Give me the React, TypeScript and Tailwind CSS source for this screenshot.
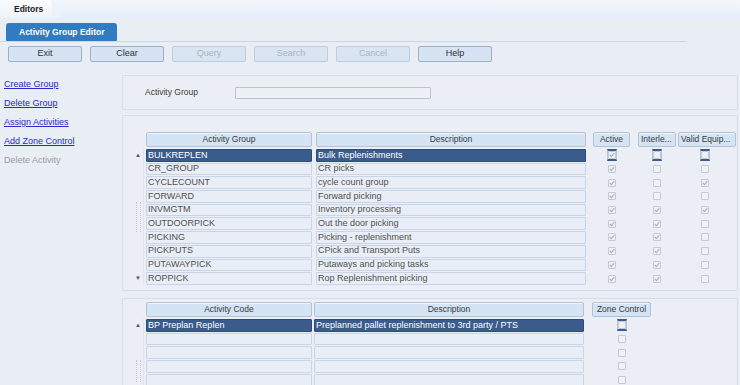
import React from "react";

type Row = { code: string; desc: string; a: boolean; i: boolean; v: boolean };

const rows: Row[] = [
  { code: "BULKREPLEN", desc: "Bulk Replenishments", a: true, i: false, v: false },
  { code: "CR_GROUP", desc: "CR picks", a: true, i: false, v: false },
  { code: "CYCLECOUNT", desc: "cycle count group", a: true, i: false, v: true },
  { code: "FORWARD", desc: "Forward picking", a: true, i: false, v: false },
  { code: "INVMGTM", desc: "Inventory processing", a: true, i: true, v: true },
  { code: "OUTDOORPICK", desc: "Out the door picking", a: true, i: true, v: false },
  { code: "PICKING", desc: "Picking - replenishment", a: true, i: true, v: false },
  { code: "PICKPUTS", desc: "CPick and Transport Puts", a: true, i: true, v: false },
  { code: "PUTAWAYPICK", desc: "Putaways and picking tasks", a: true, i: true, v: false },
  { code: "ROPPICK", desc: "Rop Replenishment picking", a: true, i: true, v: false },
];

function Check({ checked, focus }: { checked: boolean; focus?: boolean }) {
  const box = (
    <div className="w-[8px] h-[8px] border border-[#c3cad5] bg-[#eef1f6] rounded-[1px] flex items-center justify-center">
      {checked && (
        <svg width="6" height="6" viewBox="0 0 6 6">
          <polyline points="0.8,3 2.4,4.6 5.3,1.2" fill="none" stroke="#aab2be" strokeWidth="1.1" />
        </svg>
      )}
    </div>
  );
  if (focus) {
    return (
      <div className="w-[10px] h-[12px] border-t-[2px] border-b-[2px] border-x border-t-[#3b5d8e] border-b-[#3b5d8e] border-x-[#b9c3d0] flex items-center justify-center">
        {box}
      </div>
    );
  }
  return box;
}

function HeadCell({ w, children, align = "center" }: { w: string; children: React.ReactNode; align?: string }) {
  return (
    <div
      className={`${w} h-[15px] shrink-0 bg-[#d4e4f4] border border-[#b2c3d8] rounded-[2px] shadow-[inset_0_1px_0_#eef5fc] text-[8.5px] text-[#3a3a3a] flex items-center ${align === "center" ? "justify-center" : "justify-start pl-[2px]"}`}
    >
      {children}
    </div>
  );
}

function Cell({ w, text, sel }: { w: string; text?: string; sel?: boolean }) {
  return (
    <div
      className={`${w} h-full shrink-0 rounded-[1px] border flex items-center pl-[1px] text-[9px] whitespace-nowrap overflow-hidden ${
        sel ? "bg-[#3a5c8c] border-[#2e4c78] text-white" : "bg-[#e9eef6] border-[#c8d5e7] text-[#505050]"
      }`}
    >
      {text}
    </div>
  );
}

function ScrollCol({ n }: { n: number }) {
  return (
    <div className="w-[11px] shrink-0 flex flex-col items-center border-r border-[#dfe5ee] mr-[2px]">
      <div className="h-[13px] flex items-center justify-center text-[6px] text-[#555]">▲</div>
      <div className="flex-1 flex flex-col items-center justify-center">
        <div className="w-[5px] h-[30px] border-l border-r border-dotted border-[#c2c9d3]" />
      </div>
      {n >= 10 && <div className="h-[13px] flex items-center justify-center text-[6px] text-[#555]">▼</div>}
    </div>
  );
}

export default function App() {
  return (
    <div className="w-[740px] h-[385px] overflow-hidden bg-[#e9edf4] font-['Liberation_Sans',Arial,sans-serif] flex flex-col relative">
      {/* top header */}
      <div className="h-[18px] shrink-0 flex bg-gradient-to-b from-[#f4f8fd] to-[#e3edf9]">
        <div className="w-[52px] h-full bg-gradient-to-b from-[#fbfcfe] to-[#eef2f8] pl-[14px] flex items-center text-[8.5px] font-bold text-[#222]">
          Editors
        </div>
        <svg width="12" height="18" viewBox="0 0 12 18" className="shrink-0">
          <path d="M0 0 C5 0 6 18 12 18 L0 18 Z" fill="#eef2f8" />
        </svg>
      </div>

      {/* blue tab */}
      <div className="w-[686px] border-b border-[#cdd6e2] pt-[5px] pl-[6px] shrink-0">
        <div className="w-[111px] h-[18px] bg-[#2f7cc2] rounded-t-[3px] rounded-b-[1px] flex items-center pl-[13px] text-[8.5px] font-bold text-white">
          Activity Group Editor
        </div>
      </div>

      {/* buttons */}
      <div className="flex pl-[8px] pt-[4px] gap-[8px] shrink-0">
        {[
          ["Exit", true],
          ["Clear", true],
          ["Query", false],
          ["Search", false],
          ["Cancel", false],
          ["Help", true],
        ].map(([label, en]) => (
          <div
            key={label as string}
            className={`w-[74px] h-[16px] rounded-[2px] border flex items-center justify-center text-[9px] ${
              en ? "bg-[#d5e3f2] border-[#9fb1c6] text-[#333]" : "bg-[#d9e5f2] border-[#c0cddd] text-[#a9b4c2]"
            }`}
          >
            {label as string}
          </div>
        ))}
      </div>

      {/* main */}
      <div className="flex flex-1 mt-[13px] min-h-0">
        {/* left nav */}
        <div className="w-[122px] shrink-0 pl-[4px] pt-[4px] flex flex-col gap-[8px] text-[9px]">
          <span className="text-[#2a2ac8] underline leading-[11px]">Create Group</span>
          <span className="text-[#2a2ac8] underline leading-[11px]">Delete Group</span>
          <span className="text-[#2a2ac8] underline leading-[11px]">Assign Activities</span>
          <span className="text-[#2a2ac8] underline leading-[11px]">Add Zone Control</span>
          <span className="text-[#9c9c9c] leading-[11px]">Delete Activity</span>
        </div>

        {/* right content */}
        <div className="flex-1 flex flex-col min-w-0">
          {/* panel 1 */}
          <div className="h-[35px] w-[616px] shrink-0 border border-[#d4dde9] bg-[#ebeef5] rounded-[2px] flex items-center pl-[22px]">
            <span className="text-[8.5px] text-[#3a3a3a] w-[90px]">Activity Group</span>
            <div className="w-[196px] h-[12px] border border-[#b9c4d2] bg-[#edf0f5] rounded-[1px]" />
          </div>

          {/* panel 2 */}
          <div className="h-[176px] w-[616px] mt-[5px] shrink-0 border border-[#d4dde9] bg-[#ebeef5] rounded-[2px] pl-[10px] pt-[16px]">
            <div className="flex items-center">
              <div className="w-[13px]" />
              <HeadCell w="w-[166px]">Activity Group</HeadCell>
              <div className="w-[4px]" />
              <HeadCell w="w-[270px]">Description</HeadCell>
              <div className="w-[7px]" />
              <HeadCell w="w-[37px]">Active</HeadCell>
              <div className="w-[8px]" />
              <HeadCell w="w-[38px]" align="left">Interle...</HeadCell>
              <div className="w-[2px]" />
              <HeadCell w="w-[58px]" align="left">Valid Equip...</HeadCell>
            </div>
            <div className="flex mt-[2px]">
              <ScrollCol n={10} />
              <div className="flex flex-col gap-[1px]">
                {rows.map((r, idx) => (
                  <div key={r.code} className="h-[12.7px] flex items-center">
                    <Cell w="w-[166px]" text={r.code} sel={idx === 0} />
                    <div className="w-[4px]" />
                    <Cell w="w-[270px]" text={r.desc} sel={idx === 0} />
                    <div className="w-[7px]" />
                    <div className="w-[37px] flex justify-center">
                      <Check checked={r.a} focus={idx === 0} />
                    </div>
                    <div className="w-[8px]" />
                    <div className="w-[38px] flex justify-center">
                      <Check checked={r.i} focus={idx === 0} />
                    </div>
                    <div className="w-[2px]" />
                    <div className="w-[54px] flex justify-center">
                      <Check checked={r.v} focus={idx === 0} />
                    </div>
                  </div>
                ))}
              </div>
            </div>
          </div>

          {/* panel 3 */}
          <div className="flex-1 w-[616px] mt-[7px] border border-[#d4dde9] bg-[#ebeef5] rounded-[2px] pl-[10px] pt-[3px]">
            <div className="flex items-center">
              <div className="w-[13px]" />
              <HeadCell w="w-[166px]">Activity Code</HeadCell>
              <div className="w-[2px]" />
              <HeadCell w="w-[270px]">Description</HeadCell>
              <div className="w-[8px]" />
              <HeadCell w="w-[59px]">Zone Control</HeadCell>
            </div>
            <div className="flex mt-[2px]">
              <div className="w-[11px] shrink-0 flex flex-col items-center border-r border-[#dfe5ee] mr-[2px]">
                <div className="h-[13px] flex items-center justify-center text-[6px] text-[#555]">▲</div>
                <div className="h-[28px]" />
                <div className="w-[5px] h-[22px] border-l border-r border-dotted border-[#c2c9d3]" />
              </div>
              <div className="flex flex-col gap-[1px]">
                {[0, 1, 2, 3, 4].map((idx) => (
                  <div key={idx} className="h-[12.7px] flex items-center">
                    <Cell w="w-[166px]" text={idx === 0 ? "BP Preplan Replen" : ""} sel={idx === 0} />
                    <div className="w-[2px]" />
                    <Cell w="w-[270px]" text={idx === 0 ? "Preplanned pallet replenishment to 3rd party / PTS" : ""} sel={idx === 0} />
                    <div className="w-[8px]" />
                    <div className="w-[59px] flex justify-center">
                      <Check checked={false} focus={idx === 0} />
                    </div>
                  </div>
                ))}
              </div>
            </div>
          </div>
        </div>
      </div>
    </div>
  );
}
